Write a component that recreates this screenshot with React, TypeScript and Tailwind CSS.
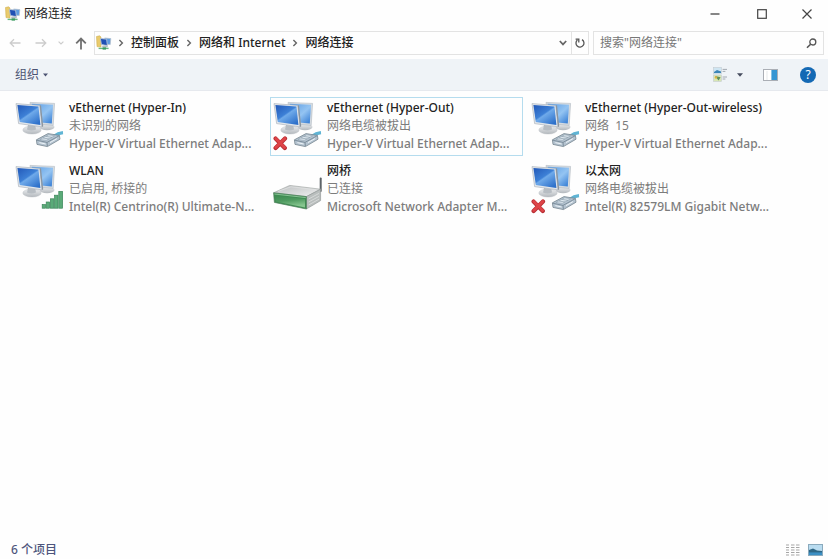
import React from "react";

type Overlay = "cable" | "unplugged" | "wifi" | "bridge";

interface Connection {
  name: string;
  status: string;
  device: string;
  overlay: Overlay;
  selected?: boolean;
}

const connections: Connection[] = [
  { name: "vEthernet (Hyper-In)", status: "未识别的网络", device: "Hyper-V Virtual Ethernet Adap...", overlay: "cable" },
  { name: "vEthernet (Hyper-Out)", status: "网络电缆被拔出", device: "Hyper-V Virtual Ethernet Adap...", overlay: "unplugged", selected: true },
  { name: "vEthernet (Hyper-Out-wireless)", status: "网络  15", device: "Hyper-V Virtual Ethernet Adap...", overlay: "cable" },
  { name: "WLAN", status: "已启用, 桥接的", device: "Intel(R) Centrino(R) Ultimate-N...", overlay: "wifi" },
  { name: "网桥", status: "已连接", device: "Microsoft Network Adapter M...", overlay: "bridge" },
  { name: "以太网", status: "网络电缆被拔出", device: "Intel(R) 82579LM Gigabit Netw...", overlay: "unplugged" },
];

function Gradients() {
  return (
    <svg width="0" height="0" className="absolute" aria-hidden="true">
      <defs>
        <linearGradient id="screen" x1="0" y1="0" x2="0.8" y2="1">
          <stop offset="0" stopColor="#2258b8" />
          <stop offset="0.48" stopColor="#3d80d6" />
          <stop offset="0.54" stopColor="#6faaea" />
          <stop offset="1" stopColor="#2d70ca" />
        </linearGradient>
        <linearGradient id="screenBack" x1="0" y1="0" x2="1" y2="1">
          <stop offset="0" stopColor="#5a9be2" />
          <stop offset="0.55" stopColor="#94c4f2" />
          <stop offset="1" stopColor="#2d77d2" />
        </linearGradient>
        <linearGradient id="stand" x1="0" y1="0" x2="0" y2="1">
          <stop offset="0" stopColor="#eceef0" />
          <stop offset="1" stopColor="#b3b8bd" />
        </linearGradient>
        <linearGradient id="greenFace" x1="0" y1="0" x2="0.3" y2="1">
          <stop offset="0" stopColor="#3c8a50" />
          <stop offset="0.5" stopColor="#4f9a60" />
          <stop offset="1" stopColor="#86c68f" />
        </linearGradient>
        <linearGradient id="boxTop" x1="0" y1="0" x2="1" y2="1">
          <stop offset="0" stopColor="#b9bcbd" />
          <stop offset="1" stopColor="#f1f2f2" />
        </linearGradient>
      </defs>
    </svg>
  );
}

function Monitors() {
  return (
    <g>
      <ellipse cx="31" cy="29" rx="7.5" ry="3.2" fill="url(#stand)" />
      <path d="M14 4.4 L38.6 5.4 L37.2 27.4 L16 25.5 Z" fill="#d5dbe1" stroke="#a9b1b9" strokeWidth="0.5" />
      <path d="M15.6 5.8 L37 6.8 L35.8 25.6 L17 23.8 Z" fill="url(#screenBack)" />
      <ellipse cx="16" cy="32" rx="9.2" ry="4" fill="url(#stand)" stroke="#b4b9be" strokeWidth="0.4" />
      <path d="M12 27 L19.4 28 L20 31.6 Q15 33.6 11 31.4 Z" fill="#b7bdc3" />
      <path d="M0 5.6 L23.8 7.4 L26 28.9 L2.6 25.6 Z" fill="#e3e7eb" stroke="#a2abb5" strokeWidth="0.6" />
      <path d="M23.8 7.4 L25 7.2 L27.2 28.2 L26 28.9 Z" fill="#8b959f" />
      <path d="M1.4 7 L22.5 8.6 L24.4 27 L3.8 24.1 Z" fill="url(#screen)" />
    </g>
  );
}

function Cable() {
  return (
    <g strokeLinejoin="round">
      <path d="M37.6 38.4 Q42 35 47 34.6" fill="none" stroke="#5fb4d4" strokeWidth="3.2" />
      <path d="M20.4 41.8 L32 35.6 L43.4 37.4 L44 41.2 L31.4 48.6 L21 46.4 Z" fill="#b4c3d0" stroke="#76858f" strokeWidth="0.8" />
      <path d="M20.6 42.2 L31 44.4 L43.4 37.6 M31 44.4 L31.4 48.2" fill="none" stroke="#70828f" strokeWidth="0.8" />
      <path d="M24 41.4 L32.8 36.8 L38.6 37.8 L30.2 42.4 Z" fill="#dce6ee" stroke="#8799a7" strokeWidth="0.5" />
      <path d="M27 40 L33 41 M30 38.4 L36 39.4" stroke="#8b9dab" strokeWidth="0.7" />
      <path d="M23.4 44.6 L29.6 46 M34 44.6 L41 40.6" stroke="#edf3f7" strokeWidth="1" />
    </g>
  );
}

function ConnectionIcon({ overlay }: { overlay: Overlay }) {
  return (
    <svg className="shrink-0" width="50" height="54" viewBox="-1 0 50 54" aria-hidden="true">
      {overlay === "bridge" ? (
        <g strokeLinejoin="round">
          <path d="M46.7 17.4 V30" stroke="#5d6368" strokeWidth="2" strokeLinecap="round" />
          <path d="M-0.4 31.8 L15.7 24.4 L46.6 28.2 L32.4 35.6 Z" fill="url(#boxTop)" stroke="#9a9f9e" strokeWidth="0.6" />
          <path d="M4 30.4 L17 25.8 L42 28.8" fill="none" stroke="#e2e4e4" strokeWidth="0.7" />
          <path d="M32.4 35.6 L46.6 28.2 L46.6 39.6 L32.4 48 Z" fill="#b9bebd" stroke="#8a9190" strokeWidth="0.6" />
          <path d="M34.6 38 L45 32.4 M34.6 41 L45 35.4 M34.6 44 L45 38.2" stroke="#dde0df" strokeWidth="0.8" />
          <path d="M-0.4 31.8 L32.4 35.6 L32.4 48 L0.4 41.4 Z" fill="#3f8c52" stroke="#4f7f5c" strokeWidth="0.7" />
          <path d="M1 34.4 L31 38 L31 46.4 L1.8 40.6 Z" fill="url(#greenFace)" />
          <path d="M0.4 33 L31.8 36.6" stroke="#8fc79a" strokeWidth="0.9" />
        </g>
      ) : (
        <Monitors />
      )}
      {(overlay === "cable" || overlay === "unplugged") && <Cable />}
      {overlay === "unplugged" && (
        <g strokeLinecap="round">
          <path d="M1.6 40.6 L10.8 50 M11 40.6 L1.6 50" stroke="#b62c32" strokeWidth="4.2" />
          <path d="M1.8 40.6 L10.6 49.6 M10.8 40.6 L1.8 49.6" stroke="#de4448" strokeWidth="2.8" />
        </g>
      )}
      {overlay === "wifi" && (
        <g fill="#5aab78" stroke="#3a8559" strokeWidth="0.7">
          <rect x="26.2" y="43.6" width="3.2" height="3.6" />
          <rect x="30.2" y="41" width="3.4" height="6.2" />
          <rect x="34.4" y="37.8" width="3.4" height="9.4" />
          <rect x="38.6" y="34.2" width="3.4" height="13" />
          <rect x="42.8" y="30.4" width="3.8" height="16.8" />
        </g>
      )}
    </svg>
  );
}

function FolderNetworkIcon() {
  return (
    <svg width="16" height="16" viewBox="0 0 16 16" className="shrink-0" aria-hidden="true">
      <path d="M0.5 1.5 L3.6 0.8 L5 2 L5 12 L1 11.6 Z" fill="#e9cb6c" stroke="#c9a745" strokeWidth="0.5" />
      <path d="M8.6 3 L14.8 3.6 L14.2 9.6 L8.8 9 Z" fill="#5c9be0" stroke="#b4c0ce" strokeWidth="0.8" />
      <path d="M4.4 3.4 L10.6 4.2 L11.4 10.6 L5.4 9.6 Z" fill="#1f50b4" stroke="#b4c3d6" strokeWidth="0.9" />
      <ellipse cx="9" cy="11.6" rx="3" ry="1" fill="#b6bcc2" />
      <path d="M2.6 13.4 H12.6" stroke="#65b880" strokeWidth="1.4" />
      <rect x="6.6" y="12.4" width="3.4" height="2.2" fill="#3d9b60" />
    </svg>
  );
}

function Chevron() {
  return (
    <svg width="8" height="10" viewBox="0 0 8 10" className="shrink-0" aria-hidden="true">
      <path d="M2.4 2 L5.4 5 L2.4 8" fill="none" stroke="#666" strokeWidth="1.4" />
    </svg>
  );
}

export default function App() {
  return (
    <div className="flex min-h-screen flex-col bg-[#fefefe] text-xs text-[#333] [font-family:'Noto_Sans','Noto_Sans_CJK_SC',sans-serif]">
      <Gradients />
      <header className="flex h-[27px] items-center pl-[5px]">
        <FolderNetworkIcon />
        <h1 className="ml-[3px] flex-1 text-[#222]">网络连接</h1>
        <div className="flex h-full">
          <button aria-label="最小化" className="flex w-[47px] items-center justify-center">
            <svg width="10" height="10" viewBox="0 0 10 10"><path d="M0.5 5 H9.5" stroke="#444" strokeWidth="1.3" /></svg>
          </button>
          <button aria-label="最大化" className="flex w-[47px] items-center justify-center">
            <svg width="10" height="10" viewBox="0 0 10 10"><rect x="0.7" y="0.7" width="8.6" height="8.6" fill="none" stroke="#444" strokeWidth="1.2" /></svg>
          </button>
          <button aria-label="关闭" className="flex w-[43px] items-center justify-center">
            <svg width="10" height="10" viewBox="0 0 10 10"><path d="M0.5 0.5 L9.5 9.5 M9.5 0.5 L0.5 9.5" stroke="#444" strokeWidth="1.2" /></svg>
          </button>
        </div>
      </header>

      <div className="flex h-8 items-center pr-1 pl-2">
        <button aria-label="后退" className="flex w-[14px] justify-center">
          <svg width="12" height="10" viewBox="0 0 12 10"><path d="M11.5 5 H1.5 M5 1.2 L1.2 5 L5 8.8" fill="none" stroke="#ccc" strokeWidth="1.3" /></svg>
        </button>
        <button aria-label="前进" className="ml-3 flex w-[14px] justify-center">
          <svg width="12" height="10" viewBox="0 0 12 10"><path d="M0.5 5 H10.5 M7 1.2 L10.8 5 L7 8.8" fill="none" stroke="#ccc" strokeWidth="1.3" /></svg>
        </button>
        <button aria-label="最近位置" className="ml-2 flex w-[10px] justify-center">
          <svg width="6" height="4" viewBox="0 0 6 4"><path d="M0.6 0.6 L3 3 L5.4 0.6" fill="none" stroke="#ccc" strokeWidth="1.1" /></svg>
        </button>
        <button aria-label="上一级" className="ml-2 flex w-[14px] justify-center">
          <svg width="12" height="13" viewBox="0 0 12 13"><path d="M6 12.5 V2 M1.2 6.4 L6 1.5 L10.8 6.4" fill="none" stroke="#707070" strokeWidth="1.8" /></svg>
        </button>
        <div className="ml-[6px] flex h-6 min-w-0 flex-1 items-center border border-[#e3e3e3]">
          <nav aria-label="地址" className="flex flex-1 items-center pl-px whitespace-nowrap">
            <FolderNetworkIcon />
            <ol className="flex items-center text-[#222]">
              {["控制面板", "网络和 Internet", "网络连接"].map((crumb) => (
                <li key={crumb} className="flex items-center">
                  <span className="flex w-[18px] justify-center"><Chevron /></span>
                  <button className="px-px font-medium">{crumb}</button>
                </li>
              ))}
            </ol>
          </nav>
          <button aria-label="历史记录" className="flex h-full w-[17px] items-center justify-center">
            <svg width="8" height="6" viewBox="0 0 8 6"><path d="M0.8 1 L4 4.4 L7.2 1" fill="none" stroke="#666" strokeWidth="1.7" /></svg>
          </button>
          <button aria-label="刷新" className="flex h-full w-[17px] items-center justify-center border-l border-[#e3e3e3]">
            <svg width="10" height="10" viewBox="0 0 10 10"><path d="M7 1.6 A4 4 0 1 1 2.4 2 M0.6 1.2 H3.8 V4.6" fill="none" stroke="#555" strokeWidth="1.3" /></svg>
          </button>
        </div>
        <div role="search" className="ml-1 flex h-6 w-[231px] items-center border border-[#e3e3e3] px-[6px]">
          <input type="text" aria-label="搜索" placeholder='搜索"网络连接"' className="h-[22px] min-w-0 flex-1 bg-transparent leading-[22px] outline-none placeholder:text-[#777]" />
          <svg width="11" height="11" viewBox="0 0 11 11" className="shrink-0" aria-hidden="true">
            <circle cx="6.8" cy="4" r="3" fill="none" stroke="#555" strokeWidth="1.3" />
            <path d="M4.6 6.2 L1 9.8" stroke="#555" strokeWidth="1.6" />
          </svg>
        </div>
      </div>

      <div role="toolbar" aria-label="命令" className="flex h-8 items-center border-b border-[#e6e9ee] bg-[#eff3f7] pr-3 pl-[15px]">
        <button className="flex items-center gap-1 text-[#4b5272]">
          组织
          <svg width="5" height="4" viewBox="0 0 5 4"><path d="M0 0.5 H5 L2.5 3.5 Z" fill="#4b5272" /></svg>
        </button>
        <span className="flex-1" />
        <button aria-label="更改视图" className="flex items-center gap-[9px]">
          <svg width="15" height="15" viewBox="0 0 15 15">
            <rect x="0.5" y="0.5" width="8" height="6.4" fill="#cfe5f2" stroke="#c3ccd0" strokeWidth="0.6" />
            <path d="M1 5 L4 3 L8 4.4 V6 H1 Z" fill="#3c86b8" />
            <rect x="0.5" y="8" width="8" height="6.4" fill="#d8e6b4" stroke="#c3ccd0" strokeWidth="0.6" />
            <path d="M2 9 L5.6 13.6 L7.6 10.2 Z" fill="#5f8f5a" />
            <circle cx="3" cy="10.4" r="1.2" fill="#e0b13e" />
            <path d="M9.6 2.4 H14 M9.6 4.4 H12.4 M9.6 10 H14 M9.6 12 H12.4" stroke="#9aa0a8" strokeWidth="0.9" />
          </svg>
          <svg width="6" height="4" viewBox="0 0 6 4"><path d="M0 0.3 H6 L3 3.7 Z" fill="#454b5e" /></svg>
        </button>
        <button aria-label="预览窗格" className="ml-5">
          <svg width="15" height="12" viewBox="0 0 15 12">
            <rect x="0.5" y="0.5" width="14" height="11" fill="#fff" stroke="#aaaeb5" />
            <rect x="8.4" y="1" width="5.6" height="10" fill="#3495d3" />
            <path d="M4 2 V11" stroke="#d5d8dc" strokeWidth="0.6" />
          </svg>
        </button>
        <button aria-label="帮助" className="ml-[22px] flex size-4 items-center justify-center rounded-full bg-[#1469b4] text-xs leading-4 text-white">?</button>
      </div>

      <main className="flex-1 px-3 pt-[6px]">
        <ul className="grid grid-cols-[repeat(auto-fill,253px)] gap-x-[5px] gap-y-1">
          {connections.map((c) => (
            <li key={c.name}>
              <button className={`flex h-[59px] w-full items-start gap-1 border pl-[2px] text-left whitespace-pre ${c.selected ? "border-[#b5dcee]" : "border-transparent"}`}>
                <ConnectionIcon overlay={c.overlay} />
                <span className="flex flex-col pt-px leading-[18px] text-[#7c7c7c]">
                  <span className="font-medium text-[#222]">{c.name}</span>
                  <span>{c.status}</span>
                  <span className="font-medium">{c.device}</span>
                </span>
              </button>
            </li>
          ))}
        </ul>
      </main>

      <footer className="flex h-[19px] items-center pr-[5px] pl-[11px] text-[#4d557c]">
        <span className="flex-1 font-medium">6 个项目</span>
        <button aria-label="详细信息" className="mr-2">
          <svg width="14" height="12" viewBox="0 0 14 12">
            <path d="M0 1 H3 M5 1 H8.5 M10 1 H13.5 M0 3.5 H3 M5 3.5 H8.5 M10 3.5 H13.5 M0 6 H3 M5 6 H8.5 M10 6 H13.5 M0 8.5 H3 M5 8.5 H8.5 M10 8.5 H13.5 M0 11 H3 M5 11 H8.5 M10 11 H13.5" stroke="#a5a5a5" />
          </svg>
        </button>
        <button aria-label="大图标">
          <svg width="15" height="12" viewBox="0 0 15 12">
            <rect x="0.5" y="0.5" width="14" height="11" fill="#b9dcf0" stroke="#8aaabd" />
            <path d="M1 6 L5 4.4 L9 6.4 L14 7 V9 H1 Z" fill="#2d6685" />
            <rect x="1" y="8.4" width="13" height="2.6" fill="#3b8fc4" />
          </svg>
        </button>
      </footer>
    </div>
  );
}
